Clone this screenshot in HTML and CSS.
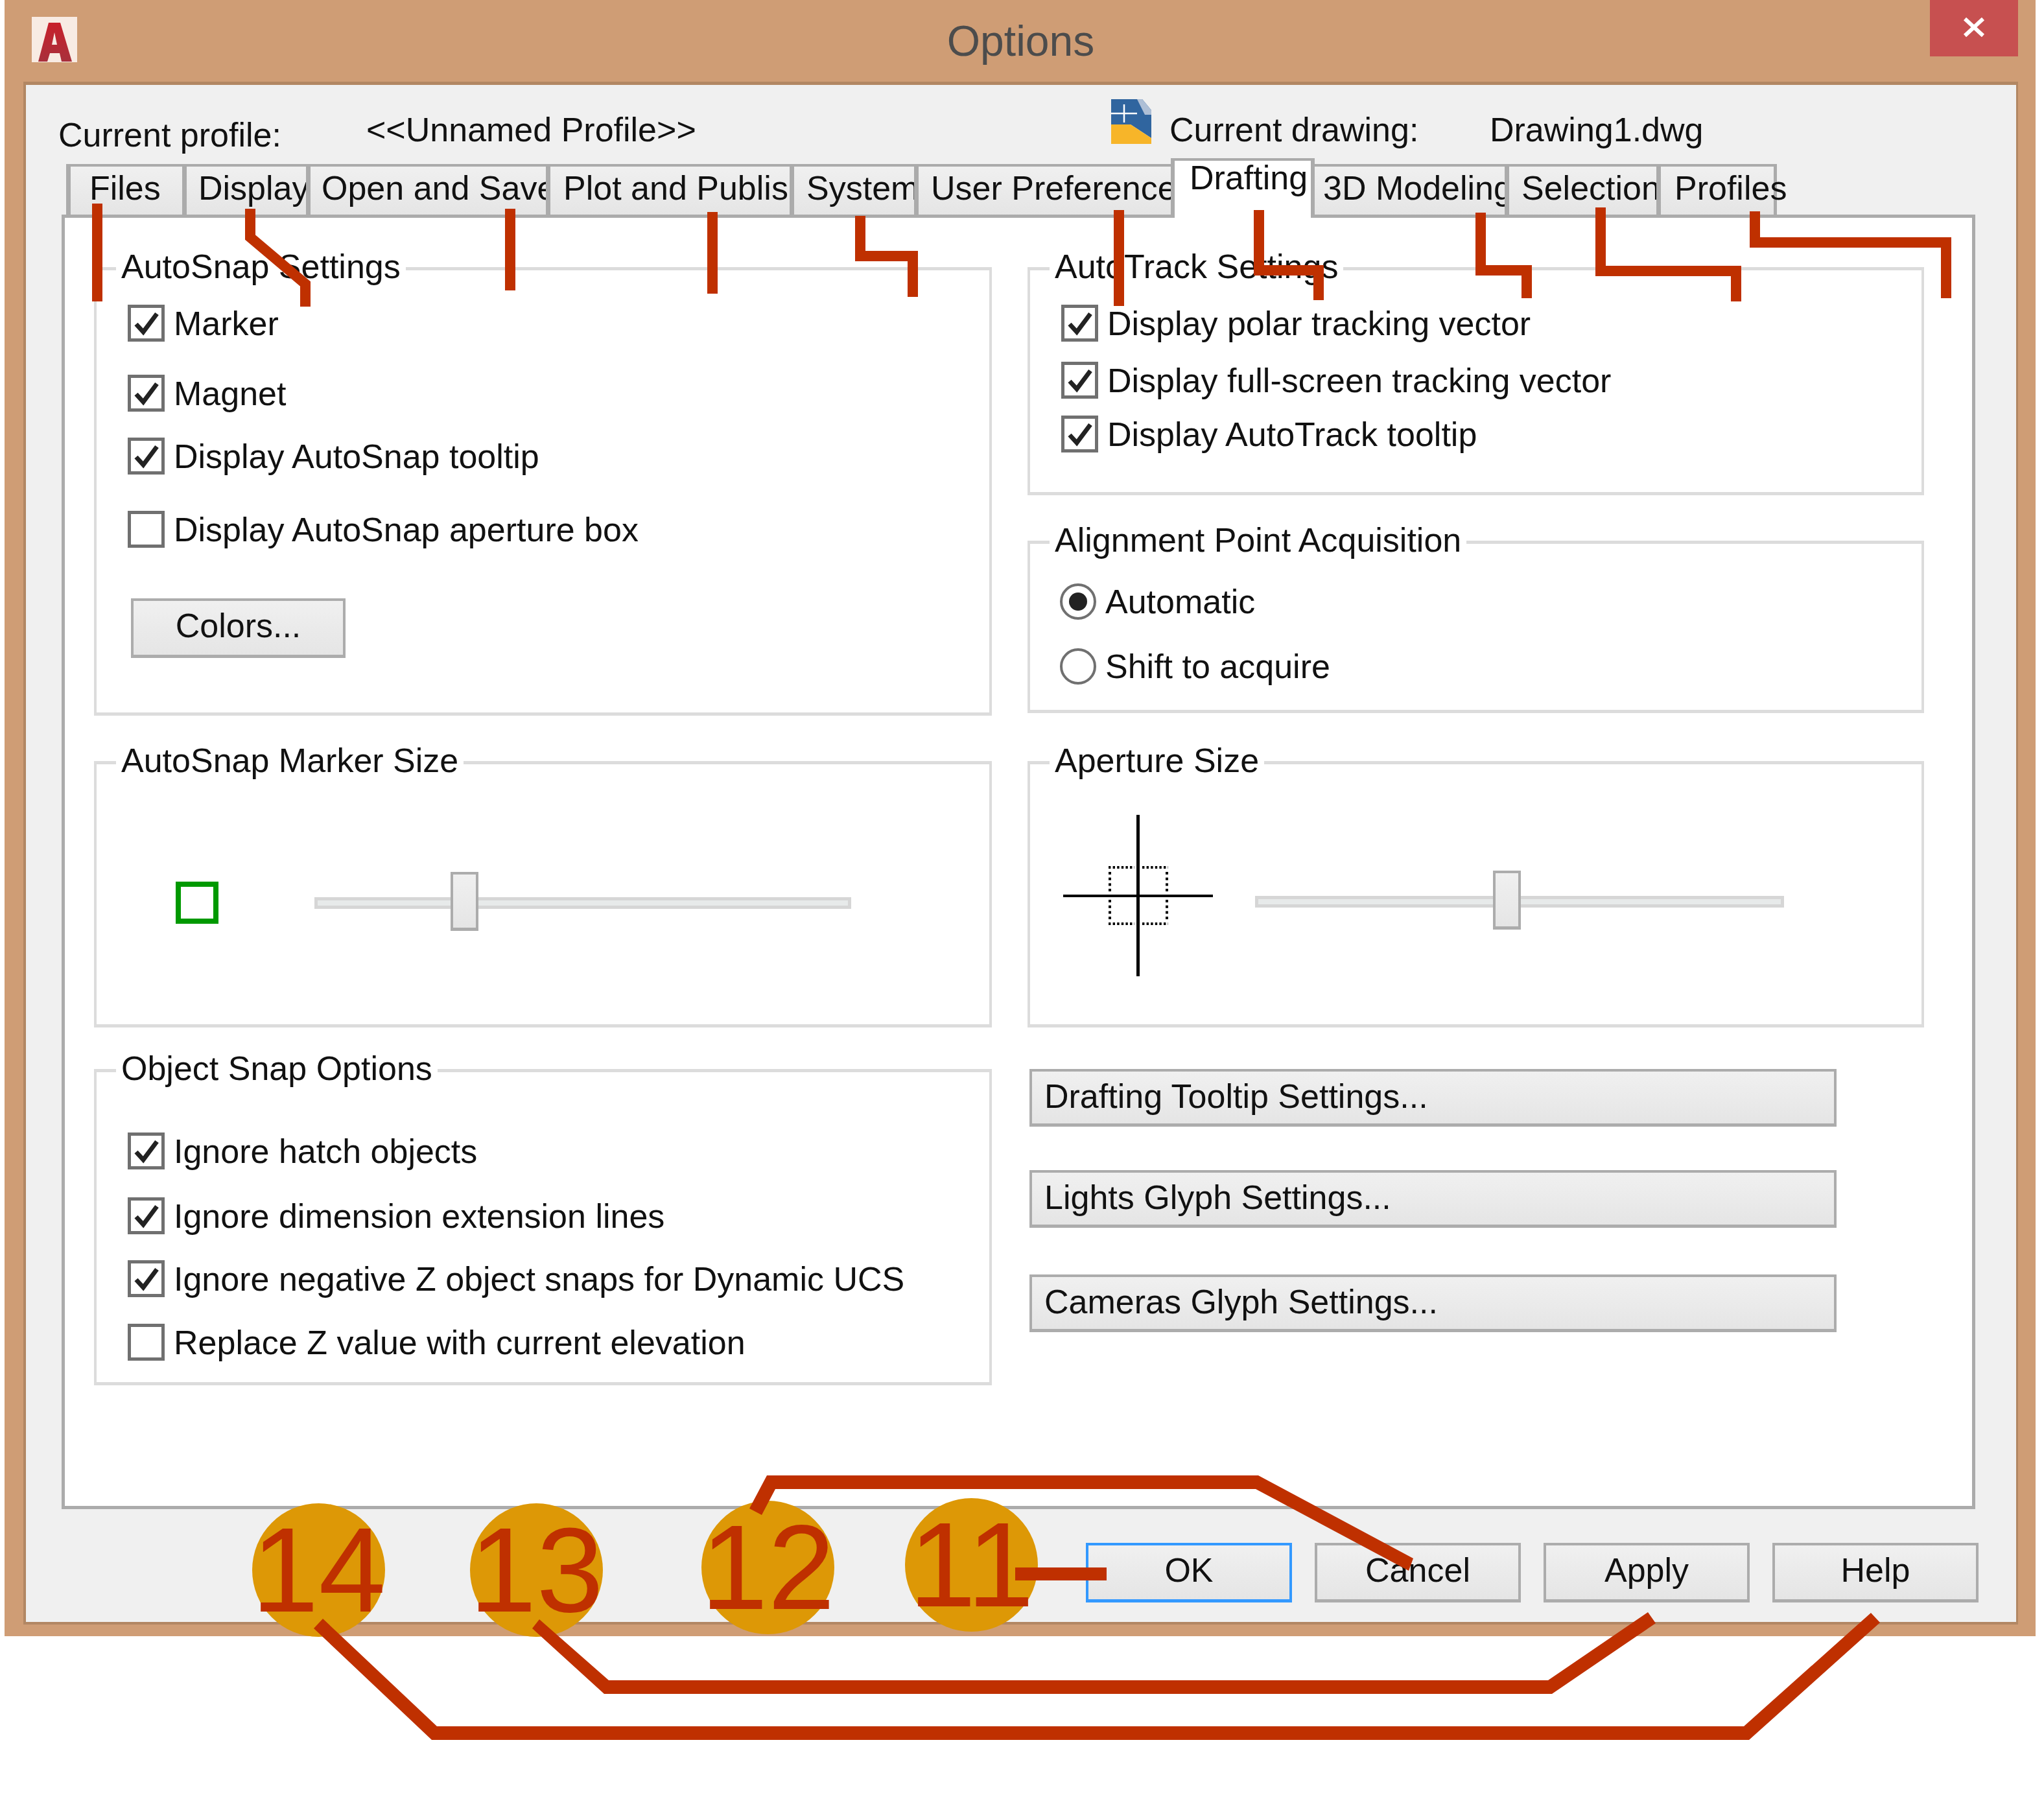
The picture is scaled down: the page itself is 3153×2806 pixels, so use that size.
FILE: index.html
```html
<!DOCTYPE html>
<html lang="en">
<head>
<meta charset="utf-8">
<title>Options</title>
<link rel="stylesheet" href="styles.css">
</head>
<body>
<div class="window">
  <div class="titlebar">
    <svg class="logo" viewBox="0 0 70 70">
      <defs><linearGradient id="logored" x1="0" y1="0" x2="0" y2="1"><stop offset="0" stop-color="#c8202a"/><stop offset="1" stop-color="#a8303c"/></linearGradient></defs>
      <rect width="70" height="70" fill="#f8ebe3"/>
      <path fill="url(#logored)" fill-rule="evenodd" d="M26 9H44L62 69H46L43 56H28L24 69H10ZM35 24L31 43H39Z"/>
    </svg>
    <div class="title">Options</div>
    <div class="close">
      <svg viewBox="0 0 34 30"><path d="M3 2L31 28M31 2L3 28" stroke="#fff" stroke-width="6" fill="none"/></svg>
    </div>
  </div>

  <div class="client">
    <div class="profile-row">
      <span class="pf pf-name">Current profile:</span>
      <span class="pf pf-value">&lt;&lt;Unnamed Profile&gt;&gt;</span>
      <svg class="dwg-icon" viewBox="0 0 62 69">
        <path fill="#30659f" d="M0 0H48L62 17V60L30 39H0Z"/>
        <path fill="#aebfd6" d="M40 0H48L62 17V24H52Z"/>
        <path fill="#f7b529" d="M0 39H30L62 60V69H0Z"/>
        <path stroke="#fff" stroke-width="2.5" fill="none" d="M20 8V36M0 22H40"/>
      </svg>
      <span class="pf pf-dwg">Current drawing:</span>
      <span class="pf pf-file">Drawing1.dwg</span>
    </div>

    <div class="tabs">
      <div class="tab tab-files">Files</div>
      <div class="tab tab-display">Display</div>
      <div class="tab tab-open">Open and Save</div>
      <div class="tab tab-plot">Plot and Publish</div>
      <div class="tab tab-system">System</div>
      <div class="tab tab-user">User Preferences</div>
      <div class="tab tab-drafting active">Drafting</div>
      <div class="tab tab-3d">3D Modeling</div>
      <div class="tab tab-selection">Selection</div>
      <div class="tab tab-profiles">Profiles</div>
    </div>

    <div class="panel">
      <div class="col">
        <div class="group g-autosnap">
          <div class="group-title">AutoSnap Settings</div>
          <div class="list list-autosnap">
            <label class="row"><span class="check on"></span>Marker</label>
            <label class="row"><span class="check on"></span>Magnet</label>
            <label class="row"><span class="check on"></span>Display AutoSnap tooltip</label>
            <label class="row"><span class="check"></span>Display AutoSnap aperture box</label>
            <div class="btn btn-colors">Colors...</div>
          </div>
        </div>
        <div class="group g-size">
          <div class="group-title">AutoSnap Marker Size</div>
          <div class="size-row">
            <div class="marker"></div>
            <div class="slider slider-marker"><div class="thumb" style="left:205px"></div></div>
          </div>
        </div>
        <div class="group g-osnap">
          <div class="group-title">Object Snap Options</div>
          <div class="list list-osnap">
            <label class="row"><span class="check on"></span>Ignore hatch objects</label>
            <label class="row"><span class="check on"></span>Ignore dimension extension lines</label>
            <label class="row"><span class="check on"></span>Ignore negative Z object snaps for Dynamic UCS</label>
            <label class="row"><span class="check"></span>Replace Z value with current elevation</label>
          </div>
        </div>
      </div>

      <div class="col">
        <div class="group g-autotrack">
          <div class="group-title">AutoTrack Settings</div>
          <div class="list list-autotrack">
            <label class="row"><span class="check on"></span>Display polar tracking vector</label>
            <label class="row"><span class="check on"></span>Display full-screen tracking vector</label>
            <label class="row"><span class="check on"></span>Display AutoTrack tooltip</label>
          </div>
        </div>
        <div class="group g-align">
          <div class="group-title">Alignment Point Acquisition</div>
          <div class="list list-align">
            <label class="row"><span class="radio on"></span>Automatic</label>
            <label class="row"><span class="radio"></span>Shift to acquire</label>
          </div>
        </div>
        <div class="group g-size">
          <div class="group-title">Aperture Size</div>
          <div class="size-row size-row-ap">
            <svg class="crosshair" viewBox="0 0 231 249">
              <path d="M0 125H231" stroke="#000" stroke-width="4"/>
              <path d="M115.5 0V249" stroke="#000" stroke-width="5"/>
              <g stroke="#000" stroke-width="4" fill="none">
                <path stroke-dasharray="3.4 3.2" d="M70 81H110M122 81H162M70 168H110M122 168H162"/>
                <path stroke-dasharray="4 4.7" d="M72 88V118M72 131V162M160 88V118M160 131V162"/>
              </g>
            </svg>
            <div class="slider slider-ap"><div class="thumb" style="left:362px"></div></div>
          </div>
        </div>
        <div class="btn btn-wide btn-drafting">Drafting Tooltip Settings...</div>
        <div class="btn btn-wide btn-lights">Lights Glyph Settings...</div>
        <div class="btn btn-wide btn-cameras">Cameras Glyph Settings...</div>
      </div>
    </div>

    <div class="actions">
      <div class="btn btn-action btn-ok">OK</div>
      <div class="btn btn-action">Cancel</div>
      <div class="btn btn-action">Apply</div>
      <div class="btn btn-action">Help</div>
    </div>
  </div>
</div>

<div class="badge b14">14</div>
<div class="badge b13">13</div>
<div class="badge b12">12</div>
<div class="badge b11">11</div>

<!-- leader lines drawn over the dialog -->
<svg class="leaders" viewBox="0 0 3153 2806">
  <g fill="none" stroke="#bf3000" stroke-width="16" stroke-linejoin="miter">
    <path d="M150 314V465"/>
    <path d="M386 322V366L471 438V473"/>
    <path d="M787 322V448"/>
    <path d="M1099 327V453"/>
    <path d="M1327 333V395H1408V458"/>
    <path d="M1726 324V472"/>
    <path d="M1942 324V417H2034V463"/>
    <path d="M2284 328V417H2355V460"/>
    <path d="M2469 320V418H2678V465"/>
    <path d="M2707 326V374H3002V460"/>
  </g>
  <g fill="#bf3000">
    <rect x="1566" y="2418" width="141" height="20"/>
    <polygon points="1183,2276 1941,2276 2180,2404 2173,2423 1937,2297 1196,2297 1175,2337 1156,2327"/>
    <polygon points="832,2498 939,2592 2388,2592 2542,2487 2554,2504 2394,2613 932,2613 821,2512"/>
    <polygon points="498,2497 674,2663 2690,2663 2886,2488 2900,2503 2698,2684 666,2684 484,2512"/>
  </g>
</svg>
</body>
</html>
```

FILE: styles.css
```css
html,body{margin:0;padding:0;background:#fff;}
body{width:3153px;height:2806px;overflow:hidden;position:relative;font-family:"Liberation Sans Narrow","Liberation Sans",sans-serif;font-size:52px;color:#111;}

.window{box-sizing:border-box;width:3133px;height:2524px;margin-left:7px;padding:0 27px 18px 29px;background:#cf9d75;display:flex;flex-direction:column;}

.titlebar{height:126px;display:grid;grid-template-columns:1fr auto 1fr;align-items:start;flex:none;}
.logo{width:70px;height:70px;margin:26px 0 0 13px;}
.title{font-family:"Liberation Sans",sans-serif;font-size:66px;line-height:90px;margin-top:18px;color:#4c4c4c;}
.close{justify-self:end;width:136px;height:87px;background:#c75050;display:flex;align-items:center;justify-content:center;}
.close svg{width:34px;height:30px;margin-top:-4px;}

.client{flex:1;background:#f0f0f0;border:solid #b28763;border-width:5px 3px 4px 4px;display:flex;flex-direction:column;min-height:0;}

.profile-row{height:113px;flex:none;position:relative;display:flex;}
.pf{display:block;line-height:60px;white-space:nowrap;}
.pf-name{margin:47px 0 0 50px;width:475px;}
.pf-value{margin:39px 0 0 0;width:1149px;}
.dwg-icon{width:62px;height:69px;margin:22px 28px 0 0;flex:none;}
.pf-dwg{margin-top:39px;width:494px;}
.pf-file{margin-top:39px;}

.tabs{display:flex;align-items:flex-end;height:92px;margin:0 0 -5px 62px;position:relative;z-index:1;flex:none;}
.tab{box-sizing:border-box;height:78px;margin-bottom:5px;padding-left:26px;line-height:66px;white-space:nowrap;background:linear-gradient(#f0f0f0,#e5e5e5);border:solid #ababab;border-width:4px 0 0 7px;}
.tab-files{width:179px;padding-left:29px;}
.tab-display{width:191px;padding-left:18px;}
.tab-open{width:370px;padding-left:17px;}
.tab-plot{width:376px;padding-left:20px;}
.tab-system{width:192px;padding-left:19px;}
.tab-user{width:396px;padding-left:19px;}
.tab-drafting{width:222px;padding-left:23px;}
.tab-3d{width:293px;padding-left:13px;border-left:0;}
.tab-selection{width:234px;padding-left:19px;}
.tab-profiles{width:186px;padding-left:21px;border-right:5px solid #ababab;}
.tab.active{height:92px;margin-bottom:0;background:#fff;border-width:4px 6px 0 6px;line-height:52px;}

.panel{box-sizing:border-box;width:2952px;height:1997px;margin-left:55px;padding:76px 0 0 45px;background:#fff;border:5px solid #ababab;display:grid;grid-template-columns:1385px 1383px;column-gap:55px;flex:none;}
.col{display:flex;flex-direction:column;}

.group{box-sizing:border-box;position:relative;border:solid #dcdcdc;border-width:5px 4px;flex:none;width:100%;}
.group-title{position:absolute;top:-36px;left:30px;padding:0 8px;background:#fff;line-height:60px;white-space:nowrap;}
.g-autosnap{height:692px;margin-bottom:70px;}
.g-size{height:411px;margin-bottom:64px;}
.g-osnap{height:488px;}
.g-autotrack{height:352px;margin-bottom:70px;}
.g-align{height:266px;margin-bottom:74px;}

.list{display:grid;align-items:start;padding:53px 0 0 48px;}
.list-autosnap{grid-template-rows:108px 97px 113px 135px 92px;}
.list-autotrack{grid-template-rows:88px 83px 57px;}
.list-align{grid-template-rows:100px 56px;padding-top:60px;padding-left:46px;}
.list-osnap{grid-template-rows:100px 97px 98px 57px;padding-top:93px;}

.row{display:flex;align-items:center;gap:14px;height:57px;white-space:nowrap;}
.check{box-sizing:border-box;width:57px;height:57px;flex:none;border:5px solid #707070;background:#fff center/40px 40px no-repeat;}
.check.on{background-image:url("data:image/svg+xml,%3Csvg xmlns='http://www.w3.org/2000/svg' viewBox='0 0 40 40'%3E%3Cpath d='M4 21L15 33L36 5' fill='none' stroke='%23222' stroke-width='7'/%3E%3C/svg%3E");}
.radio{box-sizing:border-box;width:56px;height:56px;flex:none;border:4px solid #707070;border-radius:50%;background:#fff;display:flex;align-items:center;justify-content:center;}
.radio.on::after{content:"";width:28px;height:28px;border-radius:50%;background:#222;}

.btn{box-sizing:border-box;border:solid #acacac;border-width:4px 4px 5px 4px;background:linear-gradient(#f0f0f0,#e5e5e5);text-align:center;line-height:76px;white-space:nowrap;}
.btn-colors{width:331px;height:92px;margin-left:5px;}
.btn-wide{width:1245px;height:89px;margin-left:3px;text-align:left;padding-left:19px;flex:none;}
.btn-drafting{margin-bottom:67px;}
.btn-lights{margin-bottom:72px;}

.size-row{display:flex;align-items:center;height:100%;padding:26px 0 0 122px;box-sizing:border-box;}
.size-row-ap{padding-left:51px;padding-top:0;}
.marker{box-sizing:border-box;width:66px;height:65px;border:8px solid #009900;margin-right:148px;flex:none;}
.slider{box-sizing:border-box;position:relative;height:18px;background:#e7eaea;border:5px solid #d6d6d6;flex:none;}
.slider-marker{width:828px;}
.slider-ap{width:816px;margin-left:65px;margin-top:22px;}
.thumb{box-sizing:border-box;position:absolute;top:-44px;width:43px;height:91px;border:solid #acacac;border-width:4px 4px 5px 4px;background:linear-gradient(#f0f0f0,#e5e5e5);}
.crosshair{width:231px;height:249px;flex:none;margin-top:4px;}

.actions{display:flex;justify-content:flex-end;gap:35px;padding:52px 58px 0 0;}
.btn-action{width:318px;height:92px;}
.btn-ok{border-color:#3399ff;}

.badge{position:absolute;width:205px;height:206px;border-radius:50%;background:#dd9806;color:#bf3000;display:flex;align-items:center;justify-content:center;font-size:186px;line-height:1;z-index:2;}
.b14{left:389px;top:2319px;}
.b13{left:725px;top:2319px;}
.b12{left:1082px;top:2315px;}
.b11{left:1396px;top:2311px;}

.leaders{position:absolute;left:0;top:0;width:3153px;height:2806px;z-index:3;}
```
